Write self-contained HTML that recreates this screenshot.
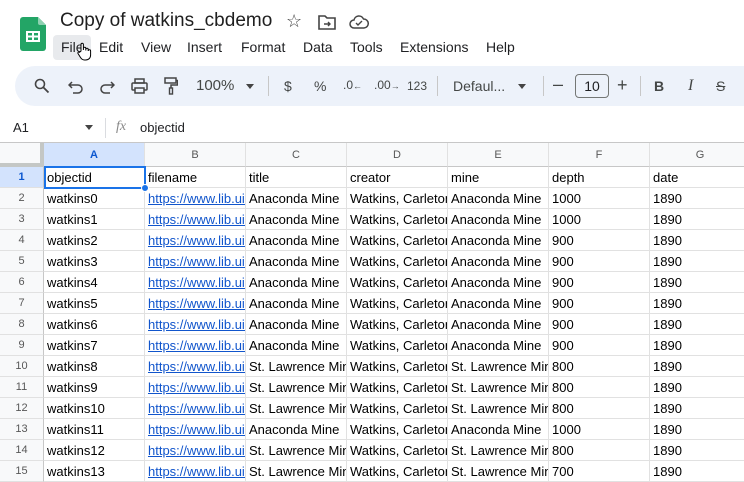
<!DOCTYPE html>
<html><head><style>
*{margin:0;padding:0;box-sizing:border-box}
body{width:744px;height:480px;overflow:hidden;background:#fff;font-family:"Liberation Sans",Arial,sans-serif;position:relative;color:#202124}
.a{position:absolute}
.menu span{position:absolute;top:39px;font-size:14px;color:#202124}
.tb{position:absolute;top:66px;left:15px;width:760px;height:40px;background:#edf2fa;border-radius:20px}
.ti{position:absolute;font-size:14px;color:#444746;top:78px}
.grid{position:absolute;left:0;top:143px}
.hc{position:absolute;height:24px;top:0;background:#f8f9fa;border-right:1px solid #e1e1e1;border-bottom:1px solid #c7c7c7;font-size:11px;color:#575757;text-align:center;line-height:24px}
.rh{position:absolute;left:0;width:44px;background:#f8f9fa;border-right:1px solid #c7c7c7;border-bottom:1px solid #e1e1e1;font-size:11px;color:#575757;text-align:center;line-height:20px;height:21px}
.c{position:absolute;height:21px;border-right:1px solid #e1e1e1;border-bottom:1px solid #e1e1e1;font-size:13px;line-height:21px;padding-left:3px;white-space:nowrap;overflow:hidden;color:#000}
.l{color:#1155cc;text-decoration:underline}
</style></head><body>
<svg class="a" style="left:20px;top:17px" width="26" height="34" viewBox="0 0 26 34"><path d="M3 0h15l8 8v23a3 3 0 0 1-3 3H3a3 3 0 0 1-3-3V3a3 3 0 0 1 3-3z" fill="#23a566"/><path d="M18 0v6a2 2 0 0 0 2 2h6z" fill="#8ed1b1"/><rect x="6" y="14" width="14" height="11" fill="#fff"/><rect x="8" y="16" width="4" height="2.5" fill="#23a566"/><rect x="14" y="16" width="4" height="2.5" fill="#23a566"/><rect x="8" y="20.5" width="4" height="2.5" fill="#23a566"/><rect x="14" y="20.5" width="4" height="2.5" fill="#23a566"/></svg>
<div class="a" style="left:60px;top:10px;font-size:19px;color:#1f1f1f">Copy of watkins_cbdemo</div>
<div class="a" style="left:286px;top:11px;font-size:18px;color:#444">☆</div>
<svg class="a" style="left:318px;top:15px" width="18" height="15" viewBox="0 0 18 15"><path d="M1 1h6l2 2h8v11H1z" fill="none" stroke="#444" stroke-width="1.6"/><path d="M6 9h6M10 7l2 2-2 2" stroke="#444" stroke-width="1.4" fill="none"/></svg>
<svg class="a" style="left:349px;top:15px" width="20" height="14" viewBox="0 0 20 14"><path d="M5 13a4 4 0 0 1 0-8 5 5 0 0 1 9.5-1A4.5 4.5 0 0 1 15 13z" fill="none" stroke="#444" stroke-width="1.5"/><path d="M7 8l2 2 4-4" fill="none" stroke="#444" stroke-width="1.4"/></svg>
<div class="a" style="left:53px;top:35px;width:38px;height:25px;background:#e8eaed;border-radius:4px"></div>
<div class="menu"><span style="left:61px">File</span><span style="left:99px">Edit</span><span style="left:141px">View</span><span style="left:187px">Insert</span><span style="left:241px">Format</span><span style="left:303px">Data</span><span style="left:350px">Tools</span><span style="left:400px">Extensions</span><span style="left:486px">Help</span></div>
<svg class="a" style="left:77px;top:42px" width="15" height="19" viewBox="0 0 15 19"><path d="M4 9V2.5a1.2 1.2 0 0 1 2.4 0V8V6.5a1.2 1.2 0 0 1 2.4 0V8.5V7.5a1.2 1.2 0 0 1 2.4 0v1.5a1.2 1.2 0 0 1 2.4 0V13c0 3-2 5-5 5H7.5c-2 0-3-1-4-2.5L1 11.5c-.5-1 .6-2 1.5-1.2z" fill="#fff" stroke="#000" stroke-width="1"/></svg>
<div class="tb"></div>
<svg class="a" style="left:34px;top:78px" width="16" height="16" viewBox="0 0 16 16"><circle cx="6" cy="6" r="4.5" fill="none" stroke="#444" stroke-width="1.6"/><path d="M9.5 9.5l5 5" stroke="#444" stroke-width="1.8"/></svg>
<svg class="a" style="left:68px;top:80px" width="16" height="14" viewBox="0 0 16 14"><path d="M4 2L1 5l3 3M1 5h9a4 4 0 0 1 0 8H5" fill="none" stroke="#444" stroke-width="1.5"/></svg>
<svg class="a" style="left:99px;top:80px" width="16" height="14" viewBox="0 0 16 14"><path d="M12 2l3 3-3 3M15 5H6a4 4 0 0 0 0 8h5" fill="none" stroke="#444" stroke-width="1.5"/></svg>
<svg class="a" style="left:131px;top:78px" width="17" height="16" viewBox="0 0 17 16"><rect x="4" y="1" width="9" height="4" fill="none" stroke="#444" stroke-width="1.5"/><rect x="1" y="5" width="15" height="7" rx="1" fill="none" stroke="#444" stroke-width="1.5"/><rect x="4" y="10" width="9" height="5" fill="#edf2fa" stroke="#444" stroke-width="1.5"/></svg>
<svg class="a" style="left:164px;top:77px" width="14" height="18" viewBox="0 0 14 18"><rect x="1" y="1" width="11" height="5" fill="none" stroke="#444" stroke-width="1.5"/><path d="M12 3.5h1.5v4.5H7v3" fill="none" stroke="#444" stroke-width="1.5"/><rect x="5.5" y="11" width="3" height="6" fill="none" stroke="#444" stroke-width="1.4"/></svg>
<div class="ti" style="left:196px;font-size:15px;top:77px">100%</div>
<div class="a" style="left:246px;top:84px;border:4px solid transparent;border-top:5px solid #444"></div>
<div class="a" style="left:268px;top:76px;width:1px;height:20px;background:#c7c7c7"></div>
<div class="ti" style="left:284px">$</div>
<div class="ti" style="left:314px">%</div>
<div class="ti" style="left:343px;font-size:12px">.0<span style="font-size:9px">←</span></div>
<div class="ti" style="left:374px;font-size:12px">.00<span style="font-size:9px">→</span></div>
<div class="ti" style="left:407px;font-size:12px;top:79px">123</div>
<div class="a" style="left:437px;top:76px;width:1px;height:20px;background:#c7c7c7"></div>
<div class="ti" style="left:453px;font-size:14px">Defaul...</div>
<div class="a" style="left:518px;top:84px;border:4px solid transparent;border-top:5px solid #444"></div>
<div class="a" style="left:543px;top:76px;width:1px;height:20px;background:#c7c7c7"></div>
<div class="ti" style="left:553px;font-size:18px;top:74px">–</div>
<div class="a" style="left:575px;top:74px;width:34px;height:24px;border:1px solid #747775;border-radius:4px;font-size:14px;text-align:center;line-height:22px;color:#202124">10</div>
<div class="ti" style="left:617px;font-size:18px;top:75px">+</div>
<div class="a" style="left:640px;top:76px;width:1px;height:20px;background:#c7c7c7"></div>
<div class="ti" style="left:654px;font-weight:bold">B</div>
<div class="ti" style="left:688px;font-style:italic;font-family:'Liberation Serif',serif;font-size:16px;top:77px">I</div>
<div class="ti" style="left:716px;text-decoration:line-through;font-size:14px">S</div>
<div class="a" style="left:13px;top:120px;font-size:13px">A1</div>
<div class="a" style="left:85px;top:125px;border:4px solid transparent;border-top:5px solid #444"></div>
<div class="a" style="left:105px;top:118px;width:1px;height:20px;background:#dadce0"></div>
<div class="a" style="left:116px;top:119px;font-size:14px;font-style:italic;color:#888;font-family:'Liberation Serif',serif">fx</div>
<div class="a" style="left:140px;top:120px;font-size:13px">objectid</div>
<div class="a" style="left:0;top:142px;width:744px;height:1px;background:#c7c7c7"></div>
<div class="grid" id="g"></div>
<script>
var g=document.getElementById('g');var h='';
var xs=[44,145,246,347,448,549,650,751];var L='ABCDEFG';
h+='<div class="a" style="left:0;top:0;width:44px;height:24px;background:#f8f9fa;border-right:4px solid #c4c7c5;border-bottom:4px solid #c4c7c5"></div>';
for(var i=0;i<7;i++){var s=i==0?'background:#d3e3fd;color:#0b57d0;font-weight:bold;':'';h+='<div class="hc" style="left:'+xs[i]+'px;width:'+(xs[i+1]-xs[i])+'px;'+s+'">'+L[i]+'</div>';}
var d=[["objectid","filename","title","creator","mine","depth","date"]];
var t=[["Anaconda Mine","Anaconda Mine","1000"],["Anaconda Mine","Anaconda Mine","1000"],["Anaconda Mine","Anaconda Mine","900"],["Anaconda Mine","Anaconda Mine","900"],["Anaconda Mine","Anaconda Mine","900"],["Anaconda Mine","Anaconda Mine","900"],["Anaconda Mine","Anaconda Mine","900"],["Anaconda Mine","Anaconda Mine","900"],["St. Lawrence Mine","St. Lawrence Mine","800"],["St. Lawrence Mine","St. Lawrence Mine","800"],["St. Lawrence Mine","St. Lawrence Mine","800"],["Anaconda Mine","Anaconda Mine","1000"],["St. Lawrence Mine","St. Lawrence Mine","800"],["St. Lawrence Mine","St. Lawrence Mine","700"]];
for(var r=0;r<14;r++)d.push(["watkins"+r,"https://www.lib.uidaho.edu",t[r][0],"Watkins, Carleton",t[r][1],t[r][2],"1890"]);
for(var r=0;r<15;r++){var y=24+r*21;var s=r==0?'background:#d3e3fd;color:#0b57d0;font-weight:bold;':'';
h+='<div class="rh" style="top:'+y+'px;'+s+'">'+(r+1)+'</div>';
for(var i=0;i<7;i++){h+='<div class="c'+(r>0&&i==1?' l':'')+'" style="left:'+xs[i]+'px;top:'+y+'px;width:'+(xs[i+1]-xs[i])+'px">'+d[r][i]+'</div>';}}
h+='<div class="a" style="left:44px;top:23px;width:102px;height:23px;border:2px solid #1a73e8"></div>';
h+='<div class="a" style="left:141px;top:41px;width:8px;height:8px;border-radius:50%;background:#1a73e8;border:1px solid #fff"></div>';
g.innerHTML=h;
</script>
</body></html>
